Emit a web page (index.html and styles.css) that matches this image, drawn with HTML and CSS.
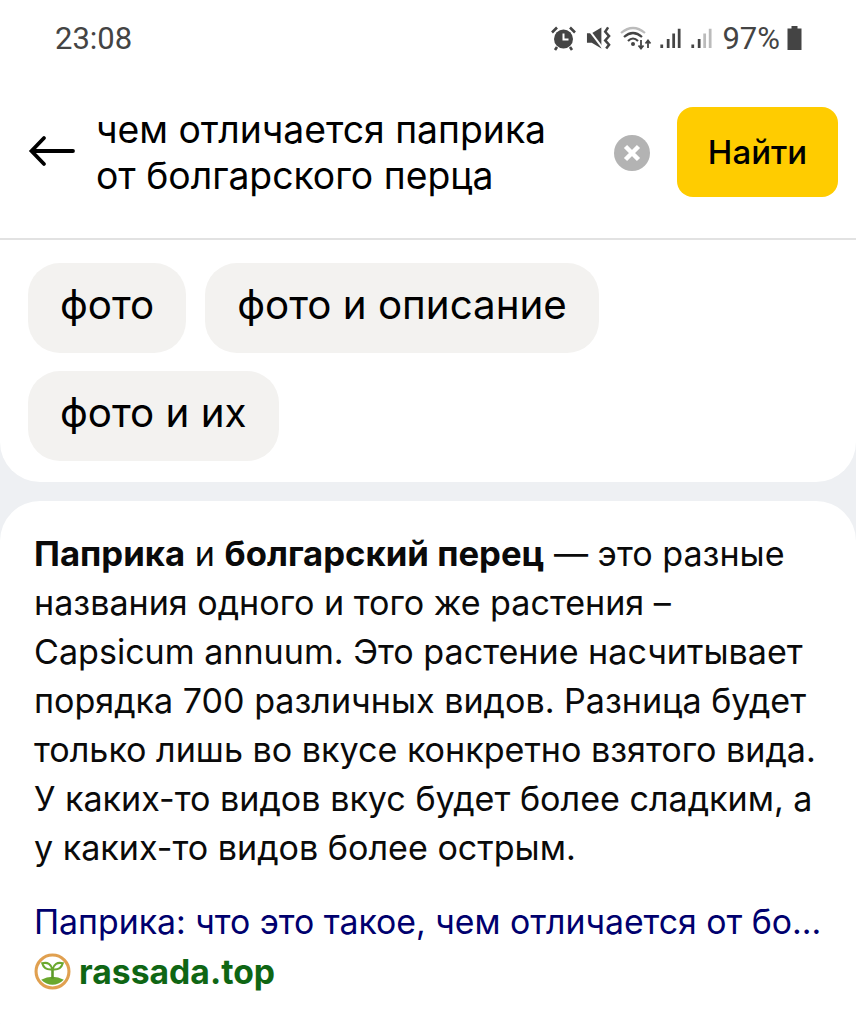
FILE: index.html
```html
<!DOCTYPE html>
<html lang="ru">
<head>
    <meta charset="UTF-8">
    <meta name="viewport" content="width=device-width, initial-scale=1.0">
    <title>Поиск</title>
    <link rel="stylesheet" href="styles.css">
</head>
<body>

    <div class="top-panel">
        <!-- Status bar -->
        <div class="status-bar">
            <span class="clock">23:08</span>
            <div class="status-icons">
                <svg class="icon-alarm" width="27" height="26" viewBox="0 0 26 26">
                    <circle cx="13" cy="14" r="9.5" fill="#444"/>
                    <path d="M13 8.5V14.5H18" fill="none" stroke="#fff" stroke-width="2"/>
                    <path d="M1.5 7.5L6.5 2.5M24.5 7.5L19.500 2.5M6.5 22L4.5 25M19.500 22L21.500 25" stroke="#444" stroke-width="2.6"/>
                </svg>
                <svg class="icon-mute" width="25" height="26" viewBox="0 0 26 26">
                    <path d="M1 8H6L16 2V24L6 18H1Z" fill="#444"/>
                    <path d="M1 2L17 23" stroke="#fff" stroke-width="2"/>
                    <path d="M23 2L20 6.500L24 11L20 15.500L24 20L21 24" fill="none" stroke="#444" stroke-width="2.600"/>
                </svg>
                <svg class="icon-wifi" width="32" height="26" viewBox="0 0 32 26">
                    <path d="M1 8Q13 -2 25 8" fill="none" stroke="#bbb" stroke-width="2.200"/>
                    <path d="M4 12Q13 4 22 12M8 16Q13 11 18 16" fill="none" stroke="#444" stroke-width="2.200"/>
                    <circle cx="13" cy="19" r="2" fill="#444"/>
                    <path d="M21 15V23M18.500 20.500L21 23.500L23.500 20.500M28 23V16M25.500 18.500L28 15.500L30.500 18.500" fill="none" stroke="#444" stroke-width="1.800"/>
                </svg>
                <svg class="icon-signal" width="22" height="26" viewBox="0 0 24 26">
                    <path d="M3 20V24M10 14V24M16 8V24M22 3V24" stroke="#444" stroke-width="3"/>
                </svg>
                <svg class="icon-signal" width="22" height="26" viewBox="0 0 24 26">
                    <path d="M3 20V24M10 14V24" stroke="#444" stroke-width="3"/>
                    <path d="M16 8V24M22 3V24" stroke="#bbb" stroke-width="3"/>
                </svg>
                <span class="battery-text">97%</span>
                <svg class="icon-battery" width="17" height="26" viewBox="0 0 16 26">
                    <path d="M5 1H11V3.500H15V25H1V3.500H5Z" fill="#444"/>
                </svg>
            </div>
        </div>

        <!-- Search -->
        <div class="search-row">
            <svg class="icon-back" width="48" height="34" viewBox="0 0 48 34">
                <path d="M45 17H4M16 4L3.500 17L16 30" fill="none" stroke="#000" stroke-width="3.800" stroke-linecap="round"/>
            </svg>
            <div class="search-text">чем отличается паприка<br>от болгарского перца</div>
            <svg class="icon-clear" width="36" height="36" viewBox="0 0 36 36">
                <circle cx="18" cy="18" r="18" fill="#b3b3b3"/>
                <path d="M11.500 11.500L24.500 24.500M24.500 11.500L11.500 24.500" stroke="#fff" stroke-width="4.500"/>
            </svg>
            <button class="search-button">Найти</button>
        </div>

        <!-- Suggestions -->
        <div class="chips">
            <span class="chip">фото</span>
            <span class="chip">фото и описание</span>
            <span class="chip">фото и их</span>
        </div>
    </div>

    <div class="answer-card">
        <p class="answer-text"><b>Паприка</b> и <b>болгарский перец</b> — это разные<br>названия одного и того же растения –<br>Capsicum annuum. Это растение насчитывает<br>порядка 700 различных видов. Разница будет<br>только лишь во вкусе конкретно взятого вида.<br>У каких-то видов вкус будет более сладким, а<br>у каких-то видов более острым.</p>
        <a class="source-title">Паприка: что это такое, чем отличается от бо...</a>
        <div class="source-site">
            <svg class="favicon" width="37" height="37" viewBox="0 0 36 36">
                <circle cx="18" cy="18" r="16" fill="#fff" stroke="#e0a050" stroke-width="3"/>
                <path d="M7 26Q18 20 29 26Q24 31 18 31Q12 31 7 26Z" fill="#6aa82e"/>
                <path d="M18 25V16" stroke="#5c9a28" stroke-width="2.500"/>
                <path d="M18 16Q10 17 8 10Q16 8 18 16ZM18 16Q26 17 28 10Q20 8 18 16Z" fill="#fff" stroke="#6aa82e" stroke-width="2"/>
            </svg>
            <span>rassada.top</span>
        </div>
    </div>

</body>
</html>
```

FILE: styles.css
```css
html, body {
    margin: 0;
    padding: 0;
}
body {
    width: 856px;
    height: 1024px;
    overflow: hidden;
    background: #eef0f3;
    font-family: Inter, "Noto Sans", Arial, sans-serif;
    color: #000;
}
.top-panel {
    background: #fff;
    height: 482px;
    border-radius: 0 0 40px 40px;
    box-sizing: border-box;
}
.status-bar {
    height: 76px;
    display: flex;
    align-items: center;
    justify-content: space-between;
    padding: 0 53px 0 55px;
    color: #444;
    font-family: Roboto, sans-serif;
}
.clock {
    font-size: 31px;
}
.status-icons {
    display: flex;
    align-items: center;
    gap: 9px;
}
.icon-wifi {
    margin-right: -2px;
}
.battery-text {
    font-size: 31px;
    margin-left: 1px;
    margin-right: -3px;
}
.search-row {
    height: 164px;
    box-sizing: border-box;
    padding: 31px 18px 0 28px;
    display: flex;
    align-items: flex-start;
    border-bottom: 2px solid #e2e2e2;
}
.icon-back {
    margin-top: 27px;
    flex-shrink: 0;
}
.search-text {
    font-size: 37.300px;
    line-height: 46px;
    margin-left: 20px;
    width: 518px;
    white-space: nowrap;
}
.icon-clear {
    margin-top: 28px;
    flex-shrink: 0;
}
.search-button {
    width: 161px;
    height: 90px;
    margin-left: 27px;
    background: #fc0;
    border: none;
    border-radius: 16px;
    font-family: inherit;
    font-size: 33px;
    font-weight: 500;
    color: #000;
    padding: 0;
}
.chips {
    display: flex;
    flex-wrap: wrap;
    gap: 18px 19px;
    padding: 23px 28px 0;
}
.chip {
    height: 90px;
    box-sizing: border-box;
    padding: 0 32px 8px;
    display: flex;
    align-items: center;
    background: #f3f2f0;
    border-radius: 32px;
    font-size: 40.300px;
}
.answer-card {
    background: #fff;
    margin-top: 19px;
    height: 560px;
    border-radius: 40px;
    padding: 28px 34px 0;
    box-sizing: border-box;
}
.answer-text {
    margin: 0;
    font-size: 34.100px;
    line-height: 49px;
    color: #0a0a0a;
    white-space: nowrap;
}
.answer-text b {
    font-size: 34.700px;
}
.source-title {
    display: block;
    margin-top: 25px;
    font-size: 33.800px;
    line-height: 49px;
    color: #00006e;
    white-space: nowrap;
}
.source-site {
    display: flex;
    align-items: center;
    gap: 8px;
    height: 50px;
    font-size: 33.700px;
    font-weight: 700;
    color: #0f6614;
}
```
